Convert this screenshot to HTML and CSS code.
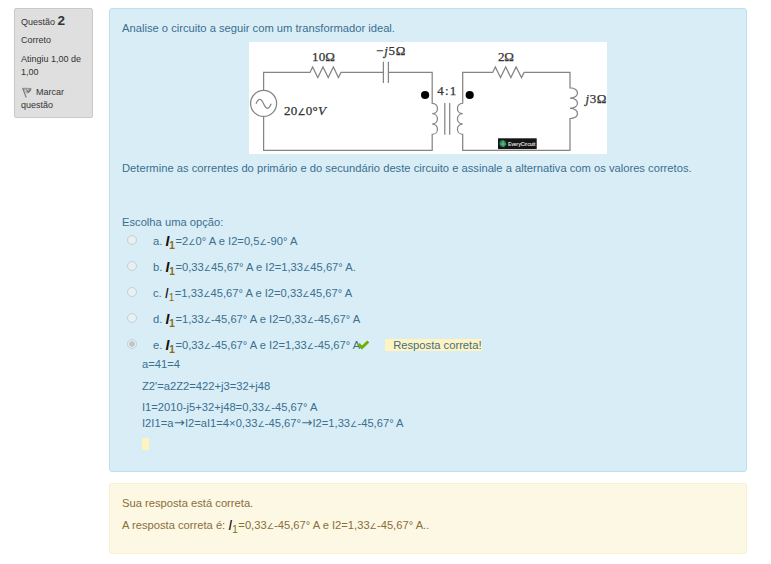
FILE: index.html
```html
<!DOCTYPE html>
<html lang="pt-BR">
<head>
<meta charset="utf-8">
<title>Questão 2</title>
<link rel="stylesheet" href="styles.css">
</head>
<body>
<div class="question">
  <aside class="info">
    <h3 class="number">Questão <b>2</b></h3>
    <div class="state">Correto</div>
    <div class="grade">Atingiu 1,00 de 1,00</div>
    <div class="flag"><svg class="flag-icon" width="10" height="11" viewBox="0 0 10 11"><path d="M.4 1 3 .7 9.5 1 9 4 6.2 6.3 4.4 6.2z" fill="#999"/><path d="M.6 1 4.2 10.5M4.8 2.8l1.7 2.4 2.4-3.5" fill="none" stroke="#777" stroke-width="1.1"/><path d="M3 2.3l1.3 3M5.2 2l1 1.5" stroke="#d8d8d8" stroke-width="1"/></svg>Marcar questão</div>
  </aside>
  <main class="content">
    <section class="formulation">
      <p class="prompt">Analise o circuito a seguir com um transformador ideal.</p>
      <svg class="circuit" width="358" height="112" viewBox="249 42 358 112">
        <rect x="249" y="42" width="358" height="112" fill="#fff"/>
        <g class="wires">
          <path d="M263.6 90V72.4H310l2.6-5.4 5.2 10.6 5.2-10.6 5.2 10.6 5.2-10.6 5 10.6 2.6-5.2H383.4M388.4 72.4H432.2V103.4c7 0 7 10.3 0 10.3c7 0 7 10.3 0 10.3c7 0 7 10.3 0 10.3V150.4H263.6V117"/>
          <path d="M383.4 61.8V83M388.4 61.8V83M444.8 103v31.7M449.7 103v31.7"/>
          <circle cx="263.6" cy="103.4" r="13"/>
          <path d="M256 103.8c2.5-6 5-6 7.6 0s5.2 6 7.6 0"/>
          <path d="M462.7 103.4V72.4H492.7l2.6-5.4 5.2 10.6 5.2-10.6 5.2 10.6 5.2-10.6 5.4 10.6 2.6-5.2H570V87.8c10 0 10 10.3 0 10.3c10 0 10 10.3 0 10.3c10 0 10 10.3 0 10.3V150.4H462.7V134.3c-7 0-7-10.3 0-10.3c-7 0-7-10.3 0-10.3c-7 0-7-10.3 0-10.3"/>
        </g>
        <circle cx="425.1" cy="95" r="4.1"/>
        <circle cx="469.7" cy="95" r="4.1"/>
        <g class="labels">
          <text x="312" y="61.3" textLength="23">10Ω</text>
          <text x="376" y="55" textLength="29.5">−<tspan class="var">j</tspan>5Ω</text>
          <text x="284" y="115.3" textLength="42">20<tspan class="ang">∠</tspan>0°<tspan class="var">V</tspan></text>
          <text x="437.3" y="95" textLength="19">4:1</text>
          <text x="498" y="61.3" textLength="16">2Ω</text>
          <text x="585.5" y="103" textLength="21"><tspan class="var">j</tspan>3Ω</text>
        </g>
        <rect x="498" y="138.3" width="38.7" height="10.8" fill="#151515"/>
        <path d="M499.5 141.5l3-1.8 3 1.6.8 3-2 3-3.4-.8-1.2-2z" fill="#2c8050"/>
        <path d="M500.5 144h5M503 141v5.5" stroke="#62c98b" stroke-width="1"/>
        <text class="brand" x="508" y="146" textLength="27.5">EveryCircuit</text>
      </svg>
      <p class="ask">Determine as correntes do primário e do secundário deste circuito e assinale a alternativa com os valores corretos.</p>
      <div class="choose">Escolha uma opção:</div>
      <div class="answers">
        <label class="option"><i class="radio"></i><span>a. <span class="cur">I<sub>1</sub></span>=2<span class="ang">∠</span>0° A e I2=0,5<span class="ang">∠</span>-90° A</span></label>
        <label class="option"><i class="radio"></i><span>b. <span class="cur">I<sub>1</sub></span>=0,33<span class="ang">∠</span>45,67° A e I2=1,33<span class="ang">∠</span>45,67° A.</span></label>
        <label class="option"><i class="radio"></i><span>c. <span class="cur thin">I<sub>1</sub></span>=1,33<span class="ang">∠</span>45,67° A e I2=0,33<span class="ang">∠</span>45,67° A</span></label>
        <label class="option"><i class="radio"></i><span>d. <span class="cur">I<sub>1</sub></span>=1,33<span class="ang">∠</span>-45,67° A e I2=0,33<span class="ang">∠</span>-45,67° A</span></label>
        <label class="option"><i class="radio on"></i><span>e. <span class="cur">I<sub>1</sub></span>=0,33<span class="ang">∠</span>-45,67° A e I2=1,33<span class="ang">∠</span>-45,67° A</span><svg class="check" width="13" height="10" viewBox="0 0 13 10"><path d="M1.5 4.2 5 7.5 11.3 1.5" fill="none" stroke="#6fb100" stroke-width="3"/></svg><span class="feedback">Resposta correta!</span></label>
      </div>
      <div class="solution">
        <p>a=41=4</p>
        <p>Z2'=a2Z2=422+j3=32+j48</p>
        <p class="tight">I1=2010-j5+32+j48=0,33<span class="ang">∠</span>-45,67° A</p>
        <p>I2I1=a<span class="arrow">→</span>I2=aI1=4×0,33<span class="ang">∠</span>-45,67°<span class="arrow">→</span>I2=1,33<span class="ang">∠</span>-45,67° A</p>
        <div class="mark"></div>
      </div>
    </section>
    <section class="outcome">
      <p>Sua resposta está correta.</p>
      <p>A resposta correta é: <span class="cur thin">I<sub>1</sub></span>=0,33<span class="ang">∠</span>-45,67° A e I2=1,33<span class="ang">∠</span>-45,67° A..</p>
    </section>
  </main>
</div>
</body>
</html>
```
FILE: styles.css
```css
* { box-sizing: border-box; }
body { margin: 0; background: #fff; font: 11.2px/16px "Liberation Sans", Arial, sans-serif; color: #333; }
p, h3 { margin: 0; }
p { white-space: nowrap; }
.question { display: flex; align-items: flex-start; gap: 16px; padding: 8px 24px 0 14px; }
.info { width: 79px; height: 110px; padding: 4px 6px; background: #dfdfdf; border: 1px solid #c9c9c9; border-radius: 2px; font-size: 9px; line-height: 13px; }
.number { font-size: 9px; font-weight: 400; line-height: 16px; }
.number b { font-size: 13.5px; }
.state { margin-top: 4px; }
.grade { margin-top: 6px; }
.flag { margin-top: 7px; }
.flag-icon { margin: 0 4px 0 1px; vertical-align: -3px; }
.content { flex: 1; min-width: 0; }
.formulation { height: 464px; padding: 11px 12px; background: #d9edf7; border: 1px solid #bce0ee; border-radius: 3px; color: #3a6f8f; }
.circuit { display: block; margin: 6px 0 0 127px; }
.ask { margin-top: 6px; }
.choose { margin-top: 38px; }
.wires { fill: none; stroke: #858585; stroke-width: 1.25; }
.labels { font: 13px "Liberation Serif", serif; fill: #333; stroke: #333; stroke-width: .25; }
.var { font-style: italic; }
.labels .ang { font-size: 9px; }
.brand { font: bold 5px "Liberation Sans", sans-serif; fill: #ddd; }
.answers { margin-top: -2px; }
.option { display: flex; align-items: center; height: 26px; padding-left: 5px; white-space: nowrap; }
.option > span { height: 16px; }
.radio { width: 10px; height: 10px; margin: -2px 16px 0 0; border: 1px solid #c5d0d5; border-radius: 50%; background: #e8f0f3; }
.radio.on { background: radial-gradient(circle, #bfc7ca 0 2.5px, #e8f0f3 3.2px); }
.cur { display: inline-block; width: 10px; height: 12px; font: italic bold 14px/12px "Liberation Sans", sans-serif; color: #111; vertical-align: -1px; }
.cur sub { font-style: normal; font-size: 10px; line-height: 0; vertical-align: -3px; color: #8a6a10; }
.thin { font-weight: 400; }
.ang { font-family: "DejaVu Sans", sans-serif; font-size: 8.2px; line-height: 1; }
.arrow { display: inline-block; width: 11.5px; height: 10px; text-align: center; font: 13px/10px "DejaVu Sans", sans-serif; }
.check { margin-left: -3px; }
.option .feedback { height: 12px; line-height: 12px; margin-left: 15px; padding-left: 8px; background: #fff3bf; }
.solution { padding-left: 20px; margin-top: -2px; }
.solution p { height: 16px; margin-bottom: 6px; }
.solution p:nth-child(2) { margin-bottom: 5px; }
.solution .tight { margin-bottom: 0; }
.mark { width: 7px; height: 12px; margin-top: 7px; background: #fff3bf; }
.outcome { height: 71px; margin-top: 11px; padding: 11px 12px; background: #fcf8e3; border: 1px solid #faefcf; border-radius: 3px; color: #8a6d3b; }
.outcome p + p { height: 16px; margin-top: 6px; }
```
